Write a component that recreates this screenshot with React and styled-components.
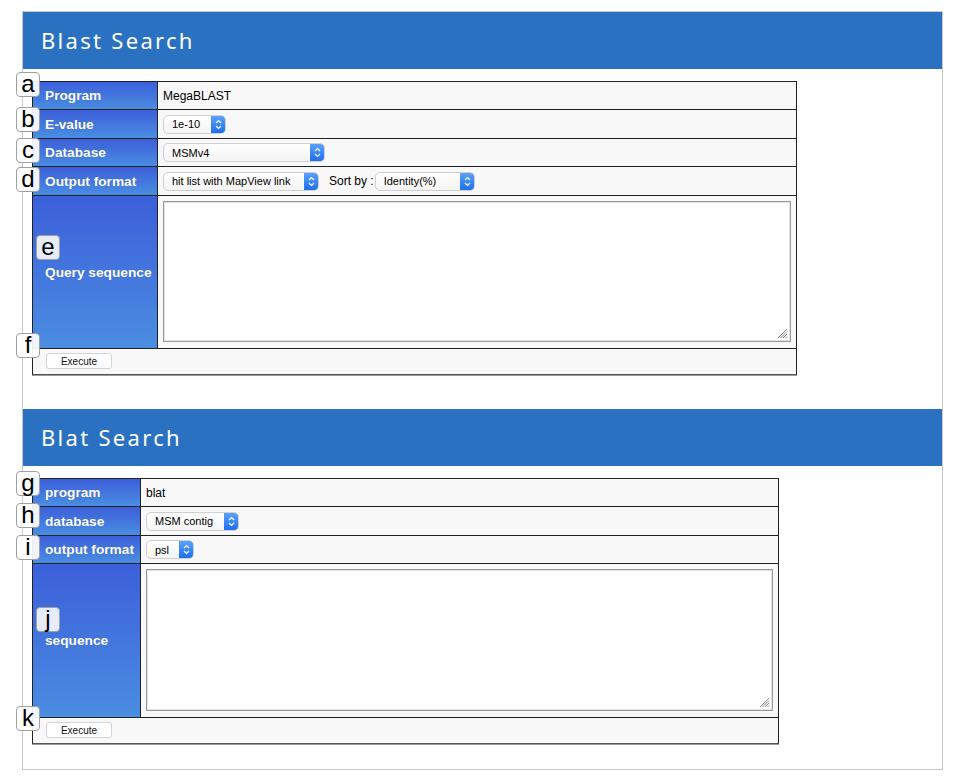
import React from "react";
import styled, { createGlobalStyle } from "styled-components";

const GlobalStyle = createGlobalStyle`
  html, body { margin: 0; padding: 0; background: #fff; }
  body { font-family: "Liberation Sans", Arial, sans-serif; color: #000; }
`;

const Page = styled.div`
  padding: 11px 0 10px 22px;
`;

const Container = styled.div`
  width: 919px;
  border: 1px solid #c8c8c8;
  padding-bottom: 25px;
`;

const Header = styled.div`
  height: 57px;
  background: #2a72c1;
  display: flex;
  align-items: center;
  padding-left: 18px;
  margin-top: ${(p) => p.$mt || 0}px;
`;

const Title = styled.h2`
  margin: 0;
  font-family: "Noto Sans", "Open Sans", sans-serif;
  font-weight: 400;
  font-size: 22px;
  letter-spacing: 2.3px;
  color: #fff;
  padding-bottom: 2px;
`;

const Body = styled.div`
  padding: 12px 0 0 9px;
`;

const Table = styled.div`
  position: relative;
  box-sizing: border-box;
  width: ${(p) => p.$w}px;
  border: 1px solid #222;
  border-bottom-color: #555;
  box-shadow: 0 1px 0 #999;
  display: grid;
  grid-template-columns: ${(p) => p.$label}px 1fr;
`;

const Label = styled.div`
  height: ${(p) => p.$h}px;
  box-sizing: border-box;
  border-right: 1px solid #222;
  border-bottom: 1px solid #222;
  background: linear-gradient(#3c5fda, #4a8de1);
  color: #fff;
  font-weight: bold;
  font-size: 13.7px;
  display: flex;
  align-items: center;
  padding-left: 12px;
  text-shadow: 0 0 1px rgba(0, 0, 0, 0.2);
`;

const Value = styled.div`
  height: ${(p) => p.$h}px;
  box-sizing: border-box;
  border-bottom: 1px solid #222;
  background: #f8f8f8;
  display: flex;
  align-items: ${(p) => (p.$top ? "flex-start" : "center")};
  padding: ${(p) => (p.$top ? "5px" : "0 5px")};
  font-size: 12px;
  gap: 4px;
`;

const Footer = styled.div`
  grid-column: 1 / 3;
  height: 25px;
  box-sizing: border-box;
  background: #f8f8f8;
  display: flex;
  align-items: flex-start;
  padding: 4px 0 0 13px;
`;

const Button = styled.button`
  width: 66px;
  height: 16px;
  padding: 0;
  border: 1px solid #d4d4d4;
  border-radius: 3px;
  background: #fff;
  font-family: "Liberation Sans", Arial, sans-serif;
  font-size: 10px;
  color: #111;
`;

const SelectBox = styled.div`
  width: ${(p) => p.$w}px;
  height: 19px;
  box-sizing: border-box;
  border: 1px solid #cfcfcf;
  border-radius: 5px;
  background: linear-gradient(#fff, #f4f4f4);
  display: flex;
  align-items: center;
  overflow: hidden;
  font-size: 11px;
  flex-shrink: 0;
`;

const SelectText = styled.span`
  flex: 1;
  padding-left: 8px;
  white-space: nowrap;
`;

const Stepper = styled.span`
  width: 15px;
  height: 19px;
  margin-right: -1px;
  background: linear-gradient(#5ea4fa, #1b6cf0);
  display: flex;
  align-items: center;
  justify-content: center;
`;

const SortLabel = styled.span`
  font-size: 12px;
  margin: 0 -3px 0 6px;
  white-space: nowrap;
`;

const AreaWrap = styled.div`
  position: relative;
  flex: 1;
  height: ${(p) => p.$h}px;
`;

const Area = styled.textarea`
  width: 100%;
  height: 100%;
  box-sizing: border-box;
  border: 1px solid #9a9a9a;
  box-shadow: inset 0 0 0 1px #e2e2e2;
  background: #fff;
  resize: none;
  margin: 0;
  display: block;
`;

const Grip = styled.svg`
  position: absolute;
  right: 3px;
  bottom: 3px;
`;

const Badge = styled.div`
  position: absolute;
  left: ${(p) => p.$x}px;
  top: ${(p) => p.$y}px;
  width: 24px;
  height: 25px;
  box-sizing: border-box;
  border: 1px solid #a0a0a0;
  border-radius: 4px;
  background: ${(p) => (p.$inside ? "#e6ecf8" : "rgba(255,255,255,0.92)")};
  font-family: "Liberation Sans", Arial, sans-serif;
  font-size: 24px;
  line-height: 21px;
  text-align: center;
  color: #000;
  z-index: 2;
`;

function Select({ w, children }) {
  return (
    <SelectBox $w={w}>
      <SelectText>{children}</SelectText>
      <Stepper>
        <svg width="7" height="11" viewBox="0 0 7 11">
          <path d="M1 4 L3.5 1.5 L6 4 M1 7 L3.5 9.5 L6 7" fill="none" stroke="#fff" strokeWidth="1.2" />
        </svg>
      </Stepper>
    </SelectBox>
  );
}

function TextBox({ h }) {
  return (
    <AreaWrap $h={h}>
      <Area />
      <Grip width="11" height="11" viewBox="0 0 11 11">
        <path d="M10 1 L1 10 M10 3.5 L3.5 10 M10 6 L6 10 M10 8.5 L8.5 10" stroke="#888" strokeWidth="1" />
      </Grip>
    </AreaWrap>
  );
}

export default function App() {
  return (
    <>
      <GlobalStyle />
      <Page>
        <Container>
          <Header>
            <Title>Blast Search</Title>
          </Header>
          <Body>
            <Table $w={765} $label={125}>
              <Badge $x={-17} $y={-10}>a</Badge>
              <Badge $x={-17} $y={25}>b</Badge>
              <Badge $x={-17} $y={56}>c</Badge>
              <Badge $x={-17} $y={85}>d</Badge>
              <Badge $x={3} $y={153} $inside>e</Badge>
              <Badge $x={-17} $y={251}>f</Badge>

              <Label $h={28}>Program</Label>
              <Value $h={28}>MegaBLAST</Value>
              <Label $h={29}>E-value</Label>
              <Value $h={29}><Select w={63}>1e-10</Select></Value>
              <Label $h={28}>Database</Label>
              <Value $h={28}><Select w={162}>MSMv4</Select></Value>
              <Label $h={29}>Output format</Label>
              <Value $h={29}>
                <Select w={156}>hit list with MapView link</Select>
                <SortLabel>Sort by :</SortLabel>
                <Select w={100}>Identity(%)</Select>
              </Value>
              <Label $h={153}>Query sequence</Label>
              <Value $h={153} $top><TextBox h={141} /></Value>
              <Footer><Button>Execute</Button></Footer>
            </Table>
          </Body>

          <Header $mt={34}>
            <Title>Blat Search</Title>
          </Header>
          <Body>
            <Table $w={747} $label={108}>
              <Badge $x={-17} $y={-8}>g</Badge>
              <Badge $x={-17} $y={24}>h</Badge>
              <Badge $x={-17} $y={56}>i</Badge>
              <Badge $x={3} $y={128} $inside>j</Badge>
              <Badge $x={-17} $y={227}>k</Badge>

              <Label $h={28}>program</Label>
              <Value $h={28}>blat</Value>
              <Label $h={29}>database</Label>
              <Value $h={29}><Select w={93}>MSM contig</Select></Value>
              <Label $h={28}>output format</Label>
              <Value $h={28}><Select w={48}>psl</Select></Value>
              <Label $h={154}>sequence</Label>
              <Value $h={154} $top><TextBox h={142} /></Value>
              <Footer><Button>Execute</Button></Footer>
            </Table>
          </Body>
        </Container>
      </Page>
    </>
  );
}
